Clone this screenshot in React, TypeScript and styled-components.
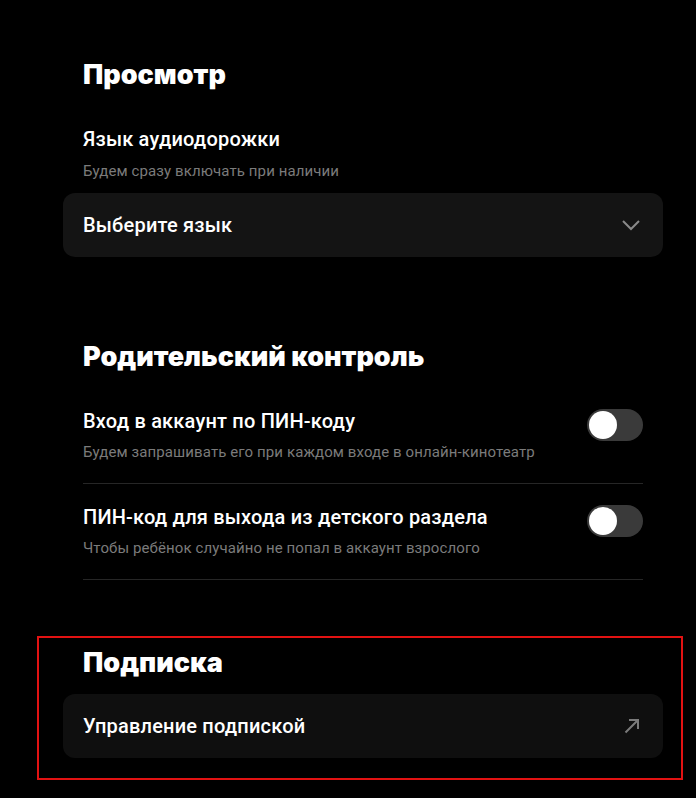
import React, { useState } from "react";
import styled, { createGlobalStyle } from "styled-components";

const GlobalStyle = createGlobalStyle`
	html, body {
		margin: 0;
		padding: 0;
		background: #000;
	}
	body {
		font-family: Roboto, "Noto Sans", "Liberation Sans", sans-serif;
		color: #fff;
	}
`;

function App() {
	const [pinLogin, setPinLogin] = useState(false);
	const [pinKids, setPinKids] = useState(false);

	return (
		<Page>
			<GlobalStyle />
			<Section>
				<Heading>Просмотр</Heading>
				<Field>
					<ItemTitle>Язык аудиодорожки</ItemTitle>
					<ItemHint>Будем сразу включать при наличии</ItemHint>
				</Field>
				<Card $tone="#141414">
					<CardText>Выберите язык</CardText>
					<svg width="20" height="12" viewBox="0 0 20 12" fill="none">
						<path d="M2 2l8 8 8-8" stroke="#8a8a8a" strokeWidth="2" />
					</svg>
				</Card>
			</Section>

			<Section $gap={84}>
				<Heading>Родительский контроль</Heading>
				<Rows>
					<Row>
						<RowText>
							<ItemTitle>Вход в аккаунт по ПИН-коду</ItemTitle>
							<ItemHint>Будем запрашивать его при каждом входе в онлайн-кинотеатр</ItemHint>
						</RowText>
						<Toggle $on={pinLogin} onClick={() => setPinLogin(!pinLogin)}>
							<Knob $on={pinLogin} />
						</Toggle>
					</Row>
					<Row>
						<RowText>
							<ItemTitle>ПИН-код для выхода из детского раздела</ItemTitle>
							<ItemHint>Чтобы ребёнок случайно не попал в аккаунт взрослого</ItemHint>
						</RowText>
						<Toggle $on={pinKids} onClick={() => setPinKids(!pinKids)}>
							<Knob $on={pinKids} />
						</Toggle>
					</Row>
				</Rows>
			</Section>

			<Highlight>
				<Heading>Подписка</Heading>
				<Card $tone="#0f0f0f" $top={15}>
					<CardText>Управление подпиской</CardText>
					<svg width="18" height="18" viewBox="0 0 18 18" fill="none">
						<path d="M2.5 15.5L15 3M6 3h9v9" stroke="#7a7a7a" strokeWidth="2" />
					</svg>
				</Card>
			</Highlight>
		</Page>
	);
}

export default App;

const Page = styled.div`
	box-sizing: border-box;
	width: 643px;
	min-height: 798px;
	padding: 59px 0 20px 83px;
	background: #000;
`;

const Section = styled.section<{ $gap?: number }>`
	display: flex;
	flex-direction: column;
	margin-top: ${(p) => p.$gap ?? 0}px;
`;

const Heading = styled.h2`
	margin: 0;
	font-family: Inter, Roboto, sans-serif;
	font-size: 27px;
	line-height: 32px;
	font-weight: 900;
	color: #fff;
`;

const Field = styled.div`
	display: flex;
	flex-direction: column;
	gap: 10px;
	margin-top: 36px;
`;

const ItemTitle = styled.div`
	font-size: 20px;
	line-height: 24px;
	font-weight: 500;
	letter-spacing: 0.2px;
	color: #fff;
`;

const ItemHint = styled.div`
	font-size: 15px;
	line-height: 20px;
	letter-spacing: 0.1px;
	color: #7b7b7b;
`;

const Card = styled.div<{ $tone: string; $top?: number }>`
	display: flex;
	align-items: center;
	justify-content: space-between;
	height: 64px;
	margin: ${(p) => p.$top ?? 12}px -20px 0;
	padding: 0 22px 0 20px;
	border-radius: 12px;
	background: ${(p) => p.$tone};
	cursor: pointer;
`;

const CardText = styled.span`
	font-size: 20px;
	font-weight: 500;
	letter-spacing: 0.2px;
	color: #fff;
`;

const Rows = styled.div`
	display: flex;
	flex-direction: column;
	margin-top: 15px;
`;

const Row = styled.div`
	display: flex;
	align-items: flex-start;
	justify-content: space-between;
	padding: 21px 0;
	border-bottom: 1px solid #262626;
`;

const RowText = styled.div`
	display: flex;
	flex-direction: column;
	gap: 9px;
`;

const Toggle = styled.button<{ $on: boolean }>`
	position: relative;
	width: 56px;
	height: 32px;
	padding: 0;
	border: none;
	border-radius: 16px;
	background: ${(p) => (p.$on ? "#ff4f12" : "#3a3a3a")};
	cursor: pointer;
	flex-shrink: 0;
`;

const Knob = styled.span<{ $on: boolean }>`
	position: absolute;
	top: 2px;
	left: ${(p) => (p.$on ? "26px" : "2px")};
	width: 28px;
	height: 28px;
	border-radius: 50%;
	background: #fff;
	transition: left 0.2s;
`;

const Highlight = styled.section`
	display: flex;
	flex-direction: column;
	margin: 56px -40px 0 -46px;
	padding: 9px 38px 20px 44px;
	border: 2px solid #e21212;
`;
